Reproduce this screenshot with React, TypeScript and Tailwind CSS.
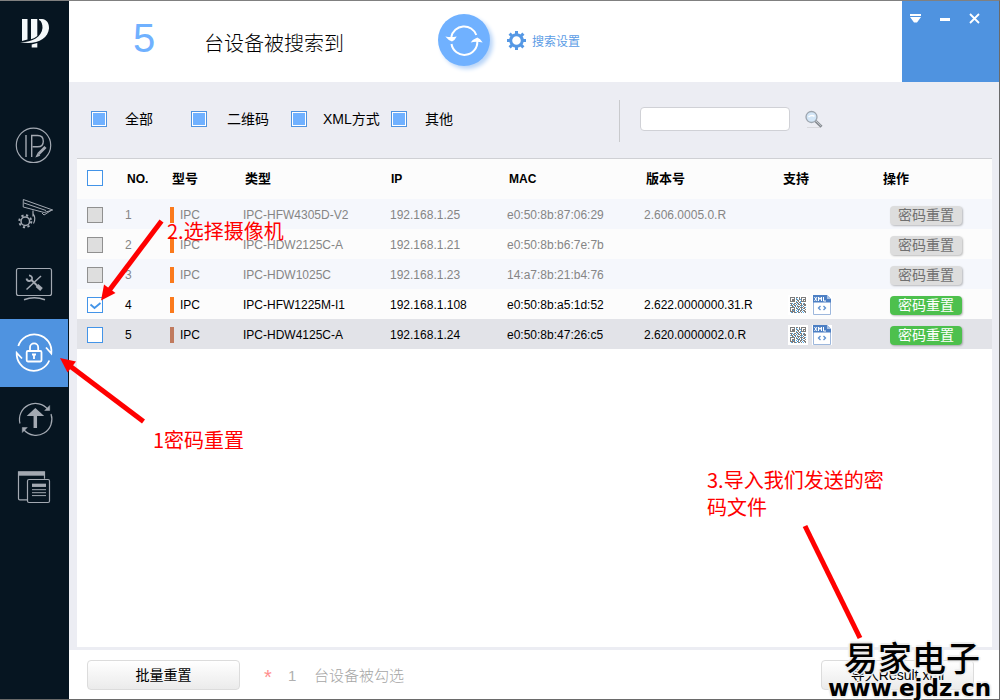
import type { ReactNode } from "react";
import clsx from "clsx";

interface Device {
    no: number;
    type: string;
    ip: string;
    mac: string;
    version: string;
    enabled: boolean;
    checked: boolean;
}

const devices: Device[] = [
    { no: 1, type: "IPC-HFW4305D-V2", ip: "192.168.1.25", mac: "e0:50:8b:87:06:29", version: "2.606.0005.0.R", enabled: false, checked: false },
    { no: 2, type: "IPC-HDW2125C-A", ip: "192.168.1.21", mac: "e0:50:8b:b6:7e:7b", version: "", enabled: false, checked: false },
    { no: 3, type: "IPC-HDW1025C", ip: "192.168.1.23", mac: "14:a7:8b:21:b4:76", version: "", enabled: false, checked: false },
    { no: 4, type: "IPC-HFW1225M-I1", ip: "192.168.1.108", mac: "e0:50:8b:a5:1d:52", version: "2.622.0000000.31.R", enabled: true, checked: true },
    { no: 5, type: "IPC-HDW4125C-A", ip: "192.168.1.24", mac: "e0:50:8b:47:26:c5", version: "2.620.0000002.0.R", enabled: true, checked: false },
];

const filters = [
    { label: "全部", gap: "gap-[18px]" },
    { label: "二维码", gap: "gap-5" },
    { label: "XML方式", gap: "gap-4" },
    { label: "其他", gap: "gap-[18px]" },
];

// 1 = grey module, 2 = blue module
const qrRows = [
    "1111101101011111",
    "1000102001010001",
    "1011101201210111",
    "1011100110010101",
    "1111102010211111",
    "0000001101200000",
    "1120110210110210",
    "0101201011010111",
    "2110110200112011",
    "0012010111020100",
    "1111102010111012",
    "1000101102010110",
    "1011100211012001",
    "1012102010110110",
    "1111100120102011",
    "0210112011010201",
];

function Logo() {
    return (
        <svg width="68" height="64" viewBox="0 0 68 64" fill="#f4f8fa" aria-hidden="true">
            <path d="M22 18h5.500v20.500l-5.500 1.500z" />
            <path d="M31 18h6.300v17q-3 2.500-6.300 3.300z" />
            <path d="M39 18h3c5 .6 7.300 4.500 7 9.500C48 38 36 44.500 20 41.300 32 41.600 41.500 36 42.500 27c.1-4-1-7-3.500-8z" />
            <path d="M31.700 43.500l5.600-1.500V46.500h-5.600z" />
        </svg>
    );
}

function NavIcon({ children }: { children: ReactNode }) {
    return (
        <svg width="68" height="68" viewBox="0 0 68 68" fill="none" stroke="currentColor" strokeWidth="1.2" aria-hidden="true">
            {children}
        </svg>
    );
}

const navItems = [
    {
        label: "修改IP",
        icon: (
            <NavIcon>
                <circle cx="33.500" cy="30.300" r="17.200" />
                <path d="M26 20v22M31.700 42V20.500h6c3.500 0 5.600 2 5.600 5.700s-2 5.600-5.600 5.600h-5" strokeWidth="1.400" />
                <path d="M38.500 39l7-7" strokeWidth="3" />
                <path d="M36.500 41.500l1.200-2.500 1.500 1.500z" fill="currentColor" />
            </NavIcon>
        ),
    },
    {
        label: "设备配置",
        icon: (
            <NavIcon>
                <path d="M23.300 16.500l29.400 10.500-8.500 2.500-21-5.500zM24 20l22 7.500M42 30l2 2 7-4.500" strokeWidth="1" />
                <path d="M33 27.500v6M33 30.500c2 2.500 2.500 7 .5 10" />
                <circle cx="25.300" cy="38.300" r="4.300" strokeWidth="1.500" />
                <circle cx="25.300" cy="38.300" r="6" strokeWidth="2" strokeDasharray="2.200 2.510" />
            </NavIcon>
        ),
    },
    {
        label: "系统设置",
        icon: (
            <NavIcon>
                <rect x="16.500" y="17.500" width="35" height="27" rx="2" />
                <path d="M24 48.800q10.300-4 21 0" strokeWidth="1.500" />
                <path d="M26.500 38.500L41 25" strokeWidth="1.500" />
                <path d="M31 28.500l9 9" strokeWidth="2" />
                <path d="M37 34.500l4.500 4" strokeWidth="4" />
                <path d="M26.500 27.500c.5 3 4.500 3.500 5.500.5.500-2-1-3.500-3-3.700" strokeWidth="1.800" />
            </NavIcon>
        ),
    },
    {
        label: "密码重置",
        icon: (
            <NavIcon>
                <g strokeWidth="1.800">
                    <path d="M18.300 27A17 17 0 0 1 51.300 34.500L46 28.500" />
                    <path d="M49.300 41.500A17 17 0 0 1 16.700 34L22 39.500" />
                    <rect x="26.700" y="32" width="14.800" height="10.500" rx="1.200" />
                    <path d="M30 32v-3.500a4.100 4.100 0 0 1 8.200 0V32" />
                    <path d="M32 35.500h4M34 35.500v4.500" />
                </g>
            </NavIcon>
        ),
    },
    {
        label: "设备升级",
        icon: (
            <NavIcon>
                <path d="M20 36.500A16 16 0 0 1 48 22.500M51 27A16 16 0 0 1 24 43" />
                <path d="M49.700 18.500v5h-5zM22.300 45.500v-5h5z" fill="currentColor" strokeWidth="0.500" />
                <path d="M35.300 41V26" strokeWidth="3.500" />
                <path d="M26.700 29l8.600-8 8.900 8z" fill="currentColor" stroke="none" />
            </NavIcon>
        ),
    },
    {
        label: "模板",
        icon: (
            <NavIcon>
                <path d="M27 44.800h-7.200q-1.300 0-1.300-1.300V16.800h26v7" />
                <path d="M18.500 18.700h26" strokeWidth="4" />
                <rect x="27.500" y="24.500" width="22" height="23" rx="1.500" />
                <path d="M32 30.300h14" strokeWidth="3.300" />
                <path d="M32 34.700h14M32 37.700h14M32 40.600h14" strokeWidth="1" />
            </NavIcon>
        ),
    },
];

function GearIcon() {
    return (
        <svg width="19" height="19" viewBox="0 0 19 19" fill="none" stroke="#5598e5" aria-hidden="true">
            <circle cx="9.500" cy="9.500" r="5.800" strokeWidth="3" />
            <path d="M9.500 0v3M9.500 16v3M0 9.500h3M16 9.500h3M2.600 2.600l2.400 2.400M14 14l2.400 2.400M2.600 16.400l2.400-2.400M14 5l2.400-2.400" strokeWidth="3" />
        </svg>
    );
}

function RefreshIcon() {
    return (
        <svg width="52" height="52" viewBox="0 0 52 52" fill="none" stroke="white" strokeWidth="2" aria-hidden="true">
            <path d="M13.300 23A13 13 0 0 1 38.300 21M13.500 30A13 13 0 0 0 39.300 27" />
            <path d="M7.300 22.500q5.500 1 11.400 0-1.700 3.700-4.700 5-4-1.500-6.700-5zM32.700 28.500q5.500-1.300 12 0-2.500-4-5.400-5-4 1.500-6.600 5z" fill="white" stroke="none" />
        </svg>
    );
}

function MagnifierIcon() {
    return (
        <svg width="18" height="19" viewBox="0 0 18 19" fill="none" aria-hidden="true">
            <path d="M2 17.500h13" stroke="#d8d9dd" />
            <path d="M10.500 11l6 5.800" stroke="#858a90" strokeWidth="2.800" />
            <path d="M11 11l5 4.800" stroke="#c9cdd1" strokeWidth="0.900" />
            <circle cx="6.500" cy="7" r="5.500" fill="#d3e6f7" stroke="#9da5ae" strokeWidth="1.300" />
            <path d="M3.500 7q3-2.500 6-.7" stroke="white" strokeWidth="1.500" />
        </svg>
    );
}

function QrIcon() {
    return (
        <svg width="20" height="20" viewBox="-2 -2 20 20" className="bg-white" role="img" aria-label="二维码">
            {qrRows.flatMap((row, y) =>
                row.split("").map((cell, x) =>
                    cell === "0" ? null : (
                        <rect key={`${x}-${y}`} x={x} y={y} width="1" height="1" fill={cell === "2" ? "#52aef0" : "#7c7c7c"} />
                    )
                )
            )}
        </svg>
    );
}

function XmlIcon() {
    return (
        <svg width="20" height="20" viewBox="0 0 20 20" className="bg-white" role="img" aria-label="XML">
            <path d="M1.500.5h14l3 3v16h-17z" fill="white" stroke="#9db7dc" />
            <path d="M1 0h14v4h4v3.500H1z" fill="#4c7fc4" />
            <path d="M15 0l4 4h-4z" fill="#a9c2e4" />
            <path d="M2.500 2l2.500 4M5 2L2.500 6M6.500 6V2L8 4.500 9.500 2v4M11.500 2v4H14" fill="none" stroke="white" />
            <path d="M8.500 11l-2 2 2 2M11.500 11l2 2-2 2" fill="none" stroke="#5b8fd0" strokeWidth="1.300" />
        </svg>
    );
}

interface TickBoxProps {
    label: string;
    checked?: boolean;
    disabled?: boolean;
}

function TickBox({ label, checked = false, disabled = false }: TickBoxProps) {
    return (
        <div className="grid w-4">
            <input
                type="checkbox"
                aria-label={label}
                defaultChecked={checked}
                disabled={disabled}
                className="peer col-start-1 row-start-1 size-4 appearance-none border border-[#4394e8] bg-white disabled:border-[#909090] disabled:bg-[#dedede]"
            />
            <svg viewBox="0 0 16 16" className="pointer-events-none col-start-1 row-start-1 hidden size-4 peer-checked:block" aria-hidden="true">
                <path d="M3.500 7.500l4 3.500 6-5" fill="none" stroke="#4394e8" strokeWidth="1.800" />
            </svg>
        </div>
    );
}

function DeviceRow({ device }: { device: Device }) {
    const last = device.no === devices.length;
    return (
        <tr
            className={clsx(
                "h-[30px] *:pt-px",
                device.enabled ? "text-black" : "text-[#858585]",
                last ? "bg-[#e2e3e8]" : device.no % 2 === 1 ? "bg-[#f5f7fc]" : "bg-[#fcfcfc]"
            )}
        >
            <td className="pl-[10px]">
                <TickBox label={`选择 ${device.ip}`} checked={device.checked} disabled={!device.enabled} />
            </td>
            <td>{device.no}</td>
            <td>
                <div className="flex items-center gap-1.5">
                    <span className={clsx("h-4 w-1", last ? "bg-[#c07a5e]" : "bg-[#fb7a1c]")} />
                    IPC
                </div>
            </td>
            <td>{device.type}</td>
            <td>{device.ip}</td>
            <td>{device.mac}</td>
            <td>{device.version}</td>
            <td className="pl-[7px]">
                {device.enabled && (
                    <div className="flex gap-1">
                        <QrIcon />
                        <XmlIcon />
                    </div>
                )}
            </td>
            <td className="pl-[7px]">
                <button
                    disabled={!device.enabled}
                    className="mt-px block h-[19px] w-[72px] rounded bg-[#4dc04d] text-sm leading-[19px] text-white shadow-[1px_1px_2px_#00000040] disabled:bg-[#dddddd] disabled:text-[#707070]"
                >
                    密码重置
                </button>
            </td>
        </tr>
    );
}

export default function App() {
    return (
        <div className="relative flex min-h-screen border-t border-r border-b border-t-[#808080] border-r-[#6a6a6a] border-b-[#6a6a6a] bg-white font-['Liberation_Sans','Noto_Sans_CJK_SC',sans-serif] text-xs text-black">
            <aside className="w-[69px] shrink-0 bg-[#061521]">
                <div className="h-[114px]">
                    <Logo />
                </div>
                <nav>
                    {navItems.map((item) => (
                        <a
                            key={item.label}
                            href="#"
                            aria-label={item.label}
                            className={clsx("block w-[68px]", item.label === "密码重置" ? "bg-[#4f93e0] text-white" : "text-[#a3a9b2]")}
                        >
                            {item.icon}
                        </a>
                    ))}
                </nav>
            </aside>

            <main className="flex min-w-0 flex-1 flex-col">
                <header className="flex h-[81px]">
                    <div className="flex flex-1 items-center pb-[3px] pl-16">
                        <span className="w-[71px] pb-1 text-[40px] leading-none text-[#70b1ff]">5</span>
                        <h1 className="w-[234px] pt-2 text-xl font-light">台设备被搜索到</h1>
                        <button aria-label="刷新" className="rounded-full bg-[#70b1ff] shadow-[3px_3px_4px_#b9d5f8]">
                            <RefreshIcon />
                        </button>
                        <a href="#" className="ml-[17px] flex items-center gap-1.5 text-[#5b9ce5]">
                            <GearIcon />
                            <span className="pt-1">搜索设置</span>
                        </a>
                    </div>
                    <div className="flex w-[97px] items-start justify-between bg-[#4f93e0] px-2 pt-[11px] text-white">
                        <button aria-label="菜单">
                            <svg width="12" height="12" viewBox="0 0 12 12" fill="currentColor">
                                <path d="M0 2h11v2H0zM0 5h11L7 10.500H4z" />
                            </svg>
                        </button>
                        <button aria-label="最小化">
                            <svg width="12" height="12" viewBox="0 0 12 12" fill="currentColor">
                                <path d="M0 6h10v3H0z" />
                            </svg>
                        </button>
                        <button aria-label="关闭" className="mr-2.5">
                            <svg width="12" height="12" viewBox="0 0 12 12" fill="none" stroke="currentColor" strokeWidth="1.800">
                                <path d="M1 2l9 9M10 2l-9 9" />
                            </svg>
                        </button>
                    </div>
                </header>

                <div className="flex flex-1 flex-col bg-[#ecedf3] pr-[7px] pb-[3px] pl-2">
                    <div className="flex h-[76px] items-center pb-0.5 pl-[14px]">
                        {filters.map((f) => (
                            <label key={f.label} className={clsx("flex w-[100px] items-center text-sm", f.gap)}>
                                <input
                                    type="checkbox"
                                    defaultChecked
                                    className="size-4 shrink-0 appearance-none border border-[#4f93e0] bg-white shadow-[inset_0_0_0_1px_white] checked:bg-[#70b1ff]"
                                />
                                <span className="whitespace-nowrap">{f.label}</span>
                            </label>
                        ))}
                        <div className="mt-1 ml-32 h-[42px] w-px bg-[#c9cacd]" />
                        <input
                            type="text"
                            aria-label="搜索"
                            className="ml-5 h-6 w-[150px] rounded border border-[#d0d1d6] bg-white px-2"
                        />
                        <button aria-label="搜索设备" className="ml-[15px]">
                            <MagnifierIcon />
                        </button>
                    </div>

                    <div className="flex-1 border-t border-[#cfd0d4] bg-white">
                        <table className="w-full table-fixed text-left whitespace-nowrap">
                            <colgroup>
                                <col className="w-12" />
                                <col className="w-[45px]" />
                                <col className="w-[73px]" />
                                <col className="w-[147px]" />
                                <col className="w-[117px]" />
                                <col className="w-[137px]" />
                                <col className="w-[137px]" />
                                <col className="w-[102px]" />
                                <col />
                            </colgroup>
                            <thead>
                                <tr className="h-10 bg-[#fcfcfc]">
                                    <th className="pb-0.5 pl-[10px]">
                                        <TickBox label="全选" />
                                    </th>
                                    <th className="pl-0.5">NO.</th>
                                    <th className="pl-0.5 text-[13px]">型号</th>
                                    <th className="pl-0.5 text-[13px]">类型</th>
                                    <th className="pl-px">IP</th>
                                    <th className="pl-0.5">MAC</th>
                                    <th className="pl-0.5 text-[13px]">版本号</th>
                                    <th className="pl-0.5 text-[13px]">支持</th>
                                    <th className="text-[13px]">操作</th>
                                </tr>
                            </thead>
                            <tbody>
                                {devices.map((d) => (
                                    <DeviceRow key={d.no} device={d} />
                                ))}
                            </tbody>
                        </table>
                    </div>
                </div>

                <footer className="flex h-[49px] items-center justify-between pr-[25px] pl-[18px]">
                    <div className="flex items-center">
                        <button className="h-[30px] w-[153px] rounded border border-[#dcdcdc] bg-linear-to-b from-white to-[#ebebeb] text-sm">
                            批量重置
                        </button>
                        <span className="ml-6 w-6 pt-1 text-xl leading-5 text-[#ff8f8f]">*</span>
                        <span className="w-[26px] pt-0.5 text-[15px] text-[#b0b0b0]">1</span>
                        <span className="pt-0.5 text-[15px] font-light text-[#a5a5a5]">台设备被勾选</span>
                    </div>
                    <button className="h-[30px] w-[153px] rounded border border-[#dcdcdc] bg-linear-to-b from-white to-[#ebebeb] text-sm">
                        导入Result.xml
                    </button>
                </footer>
            </main>

            {/* instruction notes drawn over the window */}
            <div className="pointer-events-none absolute inset-0 overflow-hidden font-['Noto_Sans_CJK_SC',sans-serif] text-xl leading-[27px] text-[#ff0000]">
                <svg className="absolute top-[350px] left-[56px]" width="94" height="80" viewBox="56 351 94 80" fill="#ff0000">
                    <path d="M143.500 421.500L70 366" stroke="#ff0000" strokeWidth="5" />
                    <path d="M60 358l16 3.500-8.500 11z" />
                </svg>
                <p className="absolute top-[425px] left-[153px]">1密码重置</p>

                <svg className="absolute top-[210px] left-[95px]" width="75" height="95" viewBox="95 211 75 95" fill="#ff0000">
                    <path d="M161.500 221L108 292" stroke="#ff0000" strokeWidth="5" />
                    <path d="M101 300.500l3-16 11.500 8.500z" />
                </svg>
                <p className="absolute top-[216px] left-[167px]">2.选择摄像机</p>

                <svg className="absolute top-[515px] left-[795px]" width="85" height="145" viewBox="795 516 85 145" fill="#ff0000">
                    <path d="M805 526l55 112" stroke="#ff0000" strokeWidth="5" />
                    <path d="M870 656l-15-13 16-1z" />
                </svg>
                <p className="absolute top-[465px] left-[707px] w-[182px]">3.导入我们发送的密码文件</p>
            </div>

            <div className="pointer-events-none absolute right-[9px] bottom-[-3px] w-[162px] text-black [text-shadow:-2px_0_1px_#eee,2px_0_1px_#eee,0_-2px_1px_#eee,0_2px_1px_#eee]">
                <p className="pl-4 text-[34px] leading-[34px] font-medium font-['Noto_Sans_CJK_SC',sans-serif]">易家电子</p>
                <p className="text-center text-[23px] leading-[28px] font-bold whitespace-nowrap font-['DejaVu_Sans',sans-serif]">www.ejdz.cn</p>
            </div>
        </div>
    );
}
